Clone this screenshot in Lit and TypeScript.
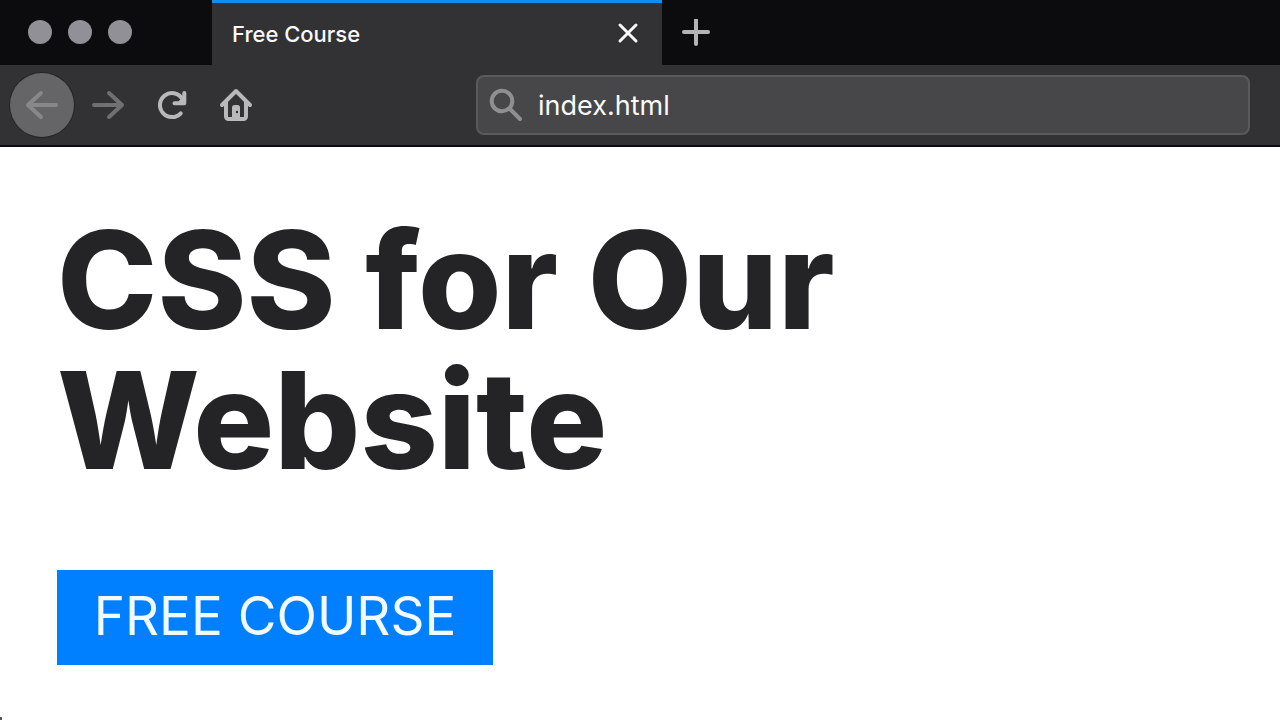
import { LitElement, html, css } from "lit";
import { customElement, property } from "lit/decorators.js";

@customElement("browser-tabs")
class BrowserTabs extends LitElement {
  @property() label = "";

  static styles = css`
    :host { display: flex; height: 65px; background: #0c0c0e; }
    button { appearance: none; border: 0; padding: 0; background: none; color: inherit; }
    svg { display: block; fill: none; stroke-linecap: round; }
    .lights { display: flex; gap: 16px; padding: 20px 80px 0 28px; }
    .light { width: 24px; height: 24px; border-radius: 50%; background: #919096; }
    .tab {
      box-sizing: border-box; display: flex; align-items: center; justify-content: space-between;
      width: 450px; padding: 0 20px; border-top: 3px solid #118ff0;
      background: #323234; color: #f9f9fa;
      font: 500 22px/28px Inter, sans-serif;
    }
    .close { width: 28px; height: 28px; stroke: #f9f9fa; stroke-width: 3; }
    .add { padding: 0 20px; stroke: #b4b4b6; stroke-width: 4; }
  `;

  render() {
    return html`
      <div class="lights">
        <button class="light" aria-label="Close window"></button>
        <button class="light" aria-label="Minimize window"></button>
        <button class="light" aria-label="Zoom window"></button>
      </div>
      <div class="tab">
        <span>${this.label}</span>
        <button class="close" aria-label="Close tab">
          <svg width="28" height="28" viewBox="0 0 28 28"><path d="M6 5 22 21M22 5 6 21" /></svg>
        </button>
      </div>
      <button class="add" aria-label="New tab">
        <svg width="28" height="28" viewBox="0 0 28 28"><path d="M14 1V25M2 13H26" /></svg>
      </button>
    `;
  }
}

@customElement("browser-toolbar")
class BrowserToolbar extends LitElement {
  @property() address = "";

  static styles = css`
    :host {
      display: flex; align-items: center; height: 80px; padding: 0 30px 0 10px;
      background: #323234; border-bottom: 2px solid #0c0c0e;
    }
    button {
      appearance: none; display: grid; place-items: center; width: 64px; height: 64px;
      border: 0; border-radius: 50%; padding: 0; background: none; color: #b9b9bb;
    }
    svg {
      display: block; flex: none; fill: none; stroke: currentColor; stroke-width: 4;
      stroke-linecap: round; stroke-linejoin: round;
    }
    .bare { stroke: none; fill: currentColor; }
    .knob { stroke: none; fill: #323234; }
    .nav { display: flex; flex: none; }
    .back { margin-right: 2px; background: #656567; color: #88888a; box-shadow: 0 0 0 1px #252527; }
    .forward { color: #707072; }
    .field {
      box-sizing: border-box; flex: 1; display: flex; align-items: center; gap: 14px;
      height: 60px; margin-left: 208px; padding: 0 12px 0 10px;
      border: 2px solid #5a5a5c; border-radius: 8px; background: #474749; color: #8f8f91;
    }
    input {
      flex: 1; min-width: 0; border: 0; padding: 2px 0 0; outline: 0; background: none;
      color: #f9f9fa; font: 400 27px/36px Inter, sans-serif;
    }
  `;

  render() {
    return html`
      <div class="nav">
        <button class="back" aria-label="Back">
          <svg width="36" height="36" viewBox="0 0 36 36"><path d="M17 6 4 18 17 30M4 18H32" /></svg>
        </button>
        <button class="forward" aria-label="Forward">
          <svg width="36" height="36" viewBox="0 0 36 36"><path d="M19 6 32 18 19 30M32 18H4" /></svg>
        </button>
        <button aria-label="Reload">
          <svg width="36" height="36" viewBox="0 0 36 36">
            <path d="M26.700 26.300A12 12 0 1 1 28 11.500" />
            <path class="bare" d="M28.300 6a2 2 0 0 1 4 0V16.200a2 2 0 0 1-2 2H20.500a2 2 0 0 1 0-4H24.500L28.300 10.500Z" />
          </svg>
        </button>
        <button aria-label="Home">
          <svg width="36" height="36" viewBox="0 0 36 36">
            <path d="M4 18 18 4 32 18" />
            <path d="M8 15V29.500a2.500 2.500 0 0 0 2.500 2.500H25.500a2.500 2.500 0 0 0 2.500-2.500V15" />
            <path class="bare" d="M14 32V20.500a2.500 2.500 0 0 1 2.500-2.500H19.500a2.500 2.500 0 0 1 2.500 2.500V32Z" />
            <circle class="knob" cx="19" cy="25" r="1.200" />
          </svg>
        </button>
      </div>
      <label class="field">
        <svg width="36" height="36" viewBox="0 0 36 36">
          <circle cx="14" cy="14" r="10.300" /><path d="M22 22 32 32" />
        </svg>
        <input type="text" aria-label="Address" .value=${this.address} />
      </label>
    `;
  }
}

@customElement("app-root")
class AppRoot extends LitElement {
  static styles = css`
    :host { display: block; min-height: 100vh; background: #fff; position: relative; }
    main { padding: 63px 57px 0; }
    h1 {
      margin: 0; max-width: 900px; color: #242426;
      font: 800 135px/140px Inter, sans-serif;
    }
    .cta {
      box-sizing: border-box; display: inline-block; min-width: 436px;
      margin-top: 80px; padding: 14px 28px 17px;
      background: #0080ff; color: #f2f9ff; text-align: center; text-decoration: none;
      font: 400 53px/64px Inter, sans-serif;
    }
    .mark { position: absolute; left: 0; bottom: 0; width: 2px; height: 3px; background: #555; }
  `;

  render() {
    return html`
      <browser-tabs label="Free Course"></browser-tabs>
      <browser-toolbar address="index.html"></browser-toolbar>
      <main>
        <h1>CSS for Our Website</h1>
        <a class="cta" href="#course">FREE COURSE</a>
      </main>
      <span class="mark"></span>
    `;
  }
}
